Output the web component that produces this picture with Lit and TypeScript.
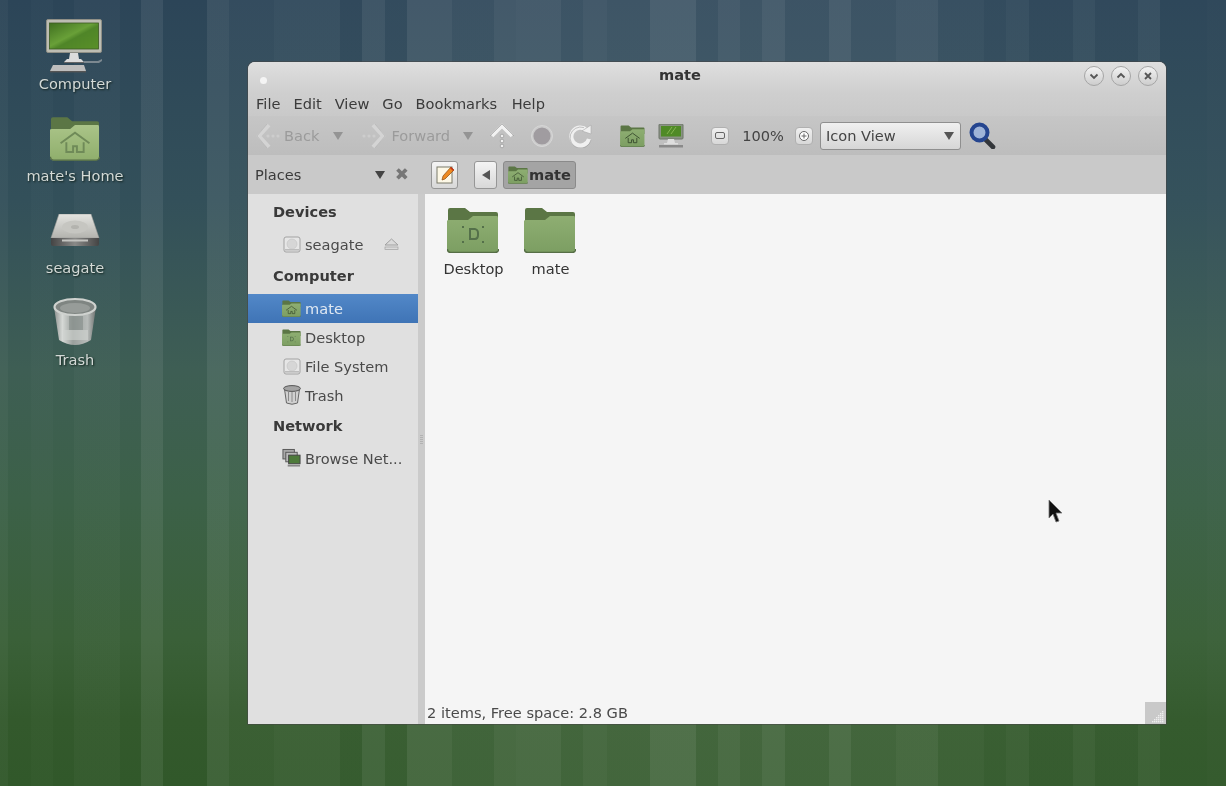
import { LitElement, html, css, svg } from "lit";
import { customElement } from "lit/decorators.js";

// stripe boundaries measured across the wallpaper: [end x in px, white alpha]
const STRIPES: [number, number][] = [
  [8, .03], [31, 0], [53, .015], [74, 0], [98, .025], [120, .025], [141, 0], [163, .07], [207, 0], [229, .075],
  [274, .04], [340, .06], [362, .025], [385, .09], [407, .035], [452, .11], [494, .07], [516, .11], [561, .12],
  [583, .08], [607, .11], [650, .085], [696, .145], [718, .08], [740, .12], [762, .085], [785, .135], [829, .08],
  [851, .135], [896, .08], [938, .105], [984, .06], [1006, .035], [1029, .06], [1073, .025], [1095, .06], [1138, .025],
  [1160, .06], [1207, .01], [1226, .02],
];

function stripeCss() {
  const stops: string[] = [];
  let x = 0;
  for (const [end, a] of STRIPES) {
    stops.push(`rgba(255,255,255,${a}) ${x}px ${end}px`);
    x = end;
  }
  return `linear-gradient(90deg, ${stops.join(",")}), linear-gradient(180deg, #2c4558 0, #33505a 200px, #3e5e54 370px, #3c6148 500px, #3a6038 640px, #33592c 720px, #31582a 786px)`;
}

const houseEmblem = (stroke: string) => svg`
  <path d="M11 28 L26 17 L41 28" fill="none" stroke=${stroke} stroke-width="2"/>
  <path d="M17 27 V37 H24 V31 H28 V37 H35 V27" fill="none" stroke=${stroke} stroke-width="2"/>`;

const deskEmblem = svg`
  <path d="M22 21 h6 q4 1 4 5 v2 q0 5 -4 5 h-6z M24 23 v8 h3.5 q2.5 0 2.5-3 v-2 q0-3-2.5-3z" fill="#54704a" fill-rule="evenodd"/>
  <g fill="#54704a"><rect x="15" y="19" width="2" height="2"/><rect x="35" y="19" width="2" height="2"/><rect x="15" y="34" width="2" height="2"/><rect x="35" y="34" width="2" height="2"/></g>`;

function folder(w: number, h: number, light: boolean, emblem: unknown = null) {
  const top = light ? "#aac488" : "#8eae72";
  const bot = light ? "#8fae6c" : "#7c9e62";
  const id = `f${w}${light ? "l" : "d"}`;
  return html`<svg width=${w} height=${h} viewBox="0 0 52 46">
    <defs><linearGradient id=${id} x1="0" y1="0" x2="0" y2="1"><stop offset="0" stop-color=${top}/><stop offset="1" stop-color=${bot}/></linearGradient></defs>
    <path d="M1 3 q0-2 2-2 h15 l5 4 h26 q2 0 2 2 v12 H1z" fill="#5b7645"/>
    <path d="M0 14 q0-1 2-1 h19 l5-4 h24 q1 0 1 2 v31 q0 4-4 4 H4 q-4 0-4-4z" fill=${`url(#${id})`}/>
    <path d="M0.5 42 q0 3.5 3.5 3.5 h44 q3.5 0 3.5-3.5" fill="none" stroke="#566e46" stroke-width="1.4"/>
    ${emblem}
  </svg>`;
}

const computerBig = html`<svg width="58" height="54" viewBox="0 0 58 54">
  <defs><linearGradient id="scr" x1="0" y1="0" x2="1" y2="1"><stop offset="0" stop-color="#3f6f20"/><stop offset=".45" stop-color="#69a038"/><stop offset=".55" stop-color="#4f8528"/><stop offset="1" stop-color="#5a9028"/></linearGradient></defs>
  <rect x=".5" y=".5" width="55" height="33" rx="1.5" fill="#bdbdb3" stroke="#8f8f86"/>
  <rect x="3.5" y="4" width="49" height="26" fill="url(#scr)" stroke="#3d5a24" stroke-width=".8"/>
  <path d="M24 34 h8 l1 6 h2 l3 3 H18 l3-3 h2z" fill="#dcdcdc"/><rect x="18" y="43" width="20" height="1" fill="#666"/>
  <path d="M7 46 h31 l2 6 H4z" fill="#bdbdbd"/><rect x="4" y="52" width="36" height="1.4" fill="#555"/>
  <path d="M38 42 h14 l4-2 v2 l-3 2 H38z" fill="#7c8890"/>
</svg>`;

const hddBig = html`<svg width="50" height="33" viewBox="0 0 50 33">
  <defs><linearGradient id="hd" x1="0" y1="0" x2="0" y2="1"><stop offset="0" stop-color="#e4e4e0"/><stop offset="1" stop-color="#b3b3ae"/></linearGradient>
  <linearGradient id="hs" x1="0" y1="0" x2="1" y2="0"><stop offset="0" stop-color="#444"/><stop offset=".5" stop-color="#8a8a88"/><stop offset="1" stop-color="#444"/></linearGradient></defs>
  <path d="M9 0 H41 L49 24 H1z" fill="url(#hd)" stroke="#9c9c98" stroke-width=".6"/>
  <ellipse cx="25" cy="13" rx="13" ry="6.5" fill="#c6c6c1"/><ellipse cx="25" cy="13" rx="4" ry="2" fill="#b3b3ae"/>
  <path d="M1 24 H49 V30 Q49 32 47 32 H3 Q1 32 1 30z" fill="url(#hs)"/><rect x="12" y="25.5" width="26" height="2" fill="#c4c4c0"/>
</svg>`;

const trashBig = html`<svg width="46" height="50" viewBox="0 0 46 50">
  <defs><linearGradient id="tb" x1="0" y1="0" x2="1" y2="0"><stop offset="0" stop-color="#8d918f"/><stop offset=".2" stop-color="#d6d9d6"/><stop offset=".45" stop-color="#9aa09d"/><stop offset=".8" stop-color="#b8bcba"/><stop offset="1" stop-color="#6f7371"/></linearGradient></defs>
  <path d="M2 10 L7 43 Q23 53 39 43 L44 10z" fill="url(#tb)"/>
  <rect x="17" y="19" width="14" height="14" fill="#848c88" opacity=".6"/>
  <rect x="12" y="33" width="24" height="10" fill="#d0d4d1" opacity=".6"/>
  <ellipse cx="23" cy="10" rx="20.5" ry="8" fill="#7f8582" stroke="#cfd2cf" stroke-width="2.2"/>
  <ellipse cx="23" cy="11" rx="15" ry="5" fill="#979c99"/>
</svg>`;

const hddSmall = html`<svg width="18" height="18" viewBox="0 0 18 18">
  <rect x="1" y="2" width="16" height="15" rx="2" fill="#e6e6e6" stroke="#a2a2a2"/>
  <circle cx="9" cy="9" r="5" fill="#d6d6d6" stroke="#c2c2c2" stroke-width=".6"/><rect x="2" y="14" width="14" height="1.6" fill="#bcbcbc"/>
</svg>`;

const trashSmall = html`<svg width="18" height="20" viewBox="0 0 18 20">
  <path d="M1.5 4 L3.5 18 Q9 20.5 14.5 18 L16.5 4z" fill="#d0d0d0" stroke="#666"/>
  <path d="M5.5 7 V16 M9 7 V17 M12.5 7 V16" stroke="#8a8a8a"/>
  <ellipse cx="9" cy="3.5" rx="8.4" ry="2.9" fill="#a4a4a4" stroke="#555"/>
</svg>`;

const netSmall = html`<svg width="20" height="20" viewBox="0 0 20 20">
  <rect x="1" y="1" width="12" height="10" fill="#a8a8a8" stroke="#555"/>
  <rect x="4" y="4" width="12" height="10" fill="#bbb" stroke="#555"/>
  <rect x="7" y="7" width="12" height="9" fill="#4d7a3a" stroke="#444"/>
  <rect x="6" y="17" width="13" height="2" fill="#888"/>
</svg>`;

const computerSmall = html`<svg width="26" height="24" viewBox="0 0 26 24">
  <rect x="1" y="0" width="24" height="15" rx="1" fill="#8a9384" stroke="#6c7468"/>
  <rect x="3" y="2" width="20" height="10.5" fill="#4f8a26"/><path d="M9 10 L14 3 M13 10 L18 3" stroke="#86b552"/>
  <path d="M10 15 h6 l1 4 h3 v1.5 H6 V19 h3z" fill="#dedede"/>
  <rect x="1" y="21" width="24" height="2.5" fill="#8a8a8a"/>
</svg>`;

const chev = (t: string) => html`<svg width="24" height="26" viewBox="0 0 24 26">
  <g transform=${t}>
    <path d="M13 2 L3 13 L13 24" fill="none" stroke="#d4d4d4" stroke-width="4"/>
    <path d="M11 1 L1 13 L11 25" fill="none" stroke="#b6b6b6" stroke-width=".7"/>
    <g fill="#cdcdcd"><circle cx="12" cy="13" r="1.6"/><circle cx="17" cy="13" r="1.6"/><circle cx="22" cy="13" r="1.6"/></g>
  </g></svg>`;

const upIcon = html`<svg width="26" height="26" viewBox="0 0 26 26">
  <path d="M3 13 L13 3 L23 13" fill="none" stroke="#f2f2f2" stroke-width="3.6"/>
  <path d="M1 13 L13 1 L25 13" fill="none" stroke="#a2a2a2" stroke-width=".7"/>
  <g fill="#f0f0f0" stroke="#8f8f8f" stroke-width=".6"><circle cx="13" cy="13" r="1.8"/><circle cx="13" cy="18" r="1.8"/><circle cx="13" cy="23" r="1.8"/></g>
</svg>`;

const stopIcon = html`<svg width="22" height="22" viewBox="0 0 22 22">
  <circle cx="11" cy="11" r="10.5" fill="#cccccc" stroke="#d6d6d6"/><circle cx="11" cy="11" r="8.6" fill="#a09ca0"/>
</svg>`;

const reloadIcon = html`<svg width="24" height="24" viewBox="0 0 24 24">
  <path d="M17.5 6 A9 9 0 1 0 20 15" fill="none" stroke="#f0f0f0" stroke-width="4.2"/>
  <path d="M13 7 L22 1 V10z" fill="#f0f0f0" stroke="#a8a8a8" stroke-width=".6"/>
  <path d="M15 3.6 A10.6 10.6 0 1 0 22 16" fill="none" stroke="#a0a0a0" stroke-width=".6"/>
</svg>`;

const searchIcon = html`<svg width="27" height="27" viewBox="0 0 27 27">
  <path d="M15 16 L24 25" stroke="#33363a" stroke-width="4.6" stroke-linecap="round"/>
  <circle cx="10.5" cy="10.5" r="8" fill="#9fb4d8" stroke="#25458f" stroke-width="4"/>
</svg>`;

const editIcon = html`<svg width="20" height="20" viewBox="0 0 20 20">
  <rect x="2" y="2" width="15" height="16" fill="#fdf8e6" stroke="#7a7a6a"/>
  <path d="M7 15 L8 11 L16 2 L19 5 L10 14z" fill="#ee8a20" stroke="#8a4a10" stroke-width=".7"/>
  <path d="M15 3 L18 6 L19 5 L16 2z" fill="#c8301c"/>
</svg>`;

const cursor = html`<svg width="16" height="24" viewBox="0 0 16 24">
  <path d="M1 0 V18 L5 14 L8 22 L11 21 L8 13 L14 13z" fill="#111" stroke="#777" stroke-width=".8"/>
</svg>`;

const winBtn = (d: string) => html`<span class="wbtn"><svg width="12" height="12" viewBox="0 0 12 12"><path d=${d} fill="none" stroke="#555" stroke-width="1.8"/></svg></span>`;

@customElement("app-root")
export class AppRoot extends LitElement {
  static styles = css`
    :host { display: block; width: 1226px; height: 786px; position: relative; overflow: hidden;
      font-family: "DejaVu Sans", sans-serif; font-size: 14.6px; color: #3b3b3b; filter: blur(.6px); }
    .bg { position: absolute; inset: 0; }
    .desk { position: relative; width: 150px; display: flex; flex-direction: column; }
    .di { height: 92px; padding-top: 17px; box-sizing: border-box; display: flex; flex-direction: column; align-items: center; }
    .di-icon { height: 62px; display: flex; align-items: center; justify-content: center; }
    .di-label { line-height: 17px; color: #d3d9d6; text-shadow: 1px 1px 2px #10201a; white-space: nowrap; }
    .win { position: absolute; left: 248px; top: 62px; width: 918px; height: 662px; box-sizing: border-box;
      border-radius: 7px 7px 0 0; display: flex; flex-direction: column; overflow: hidden;
      box-shadow: 0 0 0 1px rgba(70,70,70,.55); background: #f5f5f5; }
    .title { height: 30px; flex: none; display: flex; align-items: center; padding: 0 8px 0 12px;
      background: linear-gradient(#dfdfdf, #cfcfcf); position: relative; }
    .dot { width: 7px; height: 7px; border-radius: 50%; background: #f4f4f4; margin-top: 6px; }
    .wtitle { position: absolute; left: 0; top: 4px; width: 864px; text-align: center; font-weight: 700; color: #333; line-height: 17px; }
    .wbtns { margin-left: auto; display: flex; gap: 7px; margin-top: -2px; }
    .wbtn { width: 20px; height: 20px; border-radius: 50%; box-sizing: border-box; border: 1px solid #a5a5a5;
      background: linear-gradient(#f2f2f2, #cdcdcd); display: flex; align-items: center; justify-content: center; }
    .menu { height: 24px; box-sizing: border-box; padding-bottom: 2px; flex: none; display: flex; align-items: center; gap: 13px; padding-left: 8px;
      background: linear-gradient(#cfcfcf, #c9c9c9); }
    .menu span:last-child { margin-left: 1.5px; }
    .tools { height: 39px; flex: none; display: flex; align-items: center; padding-left: 8px;
      background: linear-gradient(#c6c6c6, #bdbdbd); }
    .tools > * { flex: none; display: flex; align-items: center; }
    .off { color: #9b9b9b; }
    .tri { width: 0; height: 0; border-left: 5px solid transparent; border-right: 5px solid transparent; border-top: 8px solid #949494; }
    .ml4 { margin-left: 4px; } .ml5 { margin-left: 5px; } .ml14 { margin-left: 14px; } .ml16 { margin-left: 16px; }
    .ml19 { margin-left: 19px; } .ml27 { margin-left: 27px; } .ml7 { margin-left: 7px; }
    .ml13 { margin-left: 13px; } .ml11 { margin-left: 11px; } .ml8 { margin-left: 8px; }
    .zb { width: 18px; height: 18px; box-sizing: border-box; border: 1px solid #b0b0b0; border-radius: 4px;
      background: linear-gradient(#f0f0f0, #d8d8d8); display: flex; align-items: center; justify-content: center; }
    .pct { color: #444; }
    .combo { width: 141px; height: 28px; box-sizing: border-box; border: 1px solid #8f8f8f; border-radius: 3px;
      background: linear-gradient(#f0f0f0, #d6d6d6); padding: 0 6px 0 5px; justify-content: space-between; color: #444; }
    .combo .tri { border-top-color: #555; }
    .loc { height: 39px; flex: none; display: flex; background: #c9c9c9; }
    .places { width: 170px; flex: none; display: flex; align-items: center; padding: 0 9px 0 7px; box-sizing: border-box; }
    .places .tri { border-top-color: #444; margin-left: auto; }
    .places .x { margin-left: 10px; font-size: 17px; font-weight: 700; color: #777; line-height: 1; }
    .path { display: flex; align-items: center; padding-left: 13px; }
    .pbtn { height: 28px; box-sizing: border-box; border: 1px solid #969696; border-radius: 3px;
      background: linear-gradient(#f4f4f4, #d8d8d8); display: flex; align-items: center; justify-content: center; }
    .pedit { width: 27px; }
    .pback { width: 23px; margin-left: 16px; }
    .pback i { width: 0; height: 0; border-top: 5px solid transparent; border-bottom: 5px solid transparent; border-right: 8px solid #555; }
    .pcur { width: 73px; margin-left: 6px; background: #a4a4a4; border-color: #8a8a8a; gap: 1px; font-weight: 700; color: #333; }
    .main { flex: 1; display: flex; min-height: 0; }
    .side { width: 170px; flex: none; background: #e0e0e0; padding-top: 2px; box-sizing: border-box; }
    .hdr { height: 32px; line-height: 32px; padding-left: 25px; font-weight: 700; margin-bottom: 2px; color: #3a3a3a; }
    .hdr.c { margin-top: 1px; }
    .row { height: 29px; box-sizing: border-box; padding-bottom: 1px; display: flex; align-items: center; padding-left: 34px; gap: 4px; color: #4a4a4a; }
    .row .ic { width: 19px; display: flex; justify-content: center; flex: none; }
    .row.sel { background: linear-gradient(#5288c8, #3f74b6); color: #dfe8f2; }
    .eject { margin-left: auto; margin-right: 19px; }
    .gut { width: 7px; flex: none; background: #cbcbcb; display: flex; align-items: center; justify-content: center; }
    .gut i { width: 3px; height: 10px; margin-top: -38px; background: repeating-linear-gradient(#b2b2b2 0 1px, transparent 1px 2px); }
    .view { flex: 1; position: relative; background: #f5f5f5; display: flex; flex-direction: column; padding: 13px 0 0 10px; box-sizing: border-box; min-width: 0; }
    .items { display: flex; }
    .it { width: 77px; display: flex; flex-direction: column; align-items: center; color: #333; }
    .it svg { margin-left: -2px; }
    .it span { margin-top: 7px; line-height: 18px; }
    .status { margin-top: auto; margin-left: -8px; height: 22px; line-height: 22px; color: #4a4a4a; }
    .grip { position: absolute; right: 0; bottom: 0; width: 21px; height: 22px; background: #c9c9c9; }
    .cur { position: absolute; left: 1048px; top: 500px; display: flex; }
  `;

  render() {
    const house = houseEmblem("#6f8a58");
    const dots = [[17,9],[15,11],[17,11],[13,13],[15,13],[17,13],[11,15],[13,15],[15,15],[17,15],[9,17],[11,17],[13,17],[15,17],[17,17],[7,19],[9,19],[11,19],[13,19],[15,19],[17,19]];
    return html`
      <div class="bg" style="background:${stripeCss()}"></div>
      <div class="desk">
        <div class="di"><div class="di-icon">${computerBig}</div><div class="di-label">Computer</div></div>
        <div class="di"><div class="di-icon">${folder(50, 45, true, house)}</div><div class="di-label">mate's Home</div></div>
        <div class="di"><div class="di-icon">${hddBig}</div><div class="di-label">seagate</div></div>
        <div class="di"><div class="di-icon">${trashBig}</div><div class="di-label">Trash</div></div>
      </div>
      <div class="win">
        <div class="title">
          <i class="dot"></i>
          <div class="wbtns">
            ${winBtn("M2.5 4.5 L6 8 L9.5 4.5")}${winBtn("M2.5 7.5 L6 4 L9.5 7.5")}${winBtn("M3 3 L9 9 M9 3 L3 9")}
          </div>
        </div>
        <div class="menu"><span>File</span><span>Edit</span><span>View</span><span>Go</span><span>Bookmarks</span><span>Help</span></div>
        <div class="tools">
          ${chev("")}
          <span class="off ml4">Back</span>
          <i class="tri ml14"></i>
          <span class="ml19">${chev("translate(24 0) scale(-1 1)")}</span>
          <span class="off ml5">Forward</span>
          <i class="tri ml13"></i>
          <span class="ml16">${upIcon}</span>
          <span class="ml16">${stopIcon}</span>
          <span class="ml16">${reloadIcon}</span>
          <span class="ml27">${folder(25, 22, false, houseEmblem("#3c5030"))}</span>
          <span class="ml13">${computerSmall}</span>
          <span class="ml27 zb"><svg width="10" height="8" viewBox="0 0 10 8"><rect x=".5" y=".5" width="9" height="6" rx="1.5" fill="none" stroke="#666"/></svg></span>
          <span class="pct ml13">100%</span>
          <span class="ml11 zb"><svg width="12" height="12" viewBox="0 0 12 12"><circle cx="6" cy="6" r="4.5" fill="#fff" stroke="#666"/><path d="M3.5 6 H8.5 M6 3.5 V8.5" stroke="#666"/></svg></span>
          <span class="combo ml7"><span>Icon View</span><i class="tri"></i></span>
          <span class="ml8">${searchIcon}</span>
        </div>
        <div class="loc">
          <div class="places"><span>Places</span><i class="tri"></i><span class="x">✖</span></div>
          <div class="path">
            <span class="pbtn pedit">${editIcon}</span>
            <span class="pbtn pback"><i></i></span>
            <span class="pbtn pcur">${folder(20, 18, false, houseEmblem("#3c5030"))}<span>mate</span></span>
          </div>
        </div>
        <div class="main">
          <div class="side">
            <div class="hdr">Devices</div>
            <div class="row"><span class="ic">${hddSmall}</span><span>seagate</span>
              <svg class="eject" width="15" height="12" viewBox="0 0 15 12"><path d="M7.5 1 L14 7 H1z" fill="#dadada" stroke="#a0a0a0"/><rect x="1" y="9" width="13" height="2.4" fill="#dadada" stroke="#a0a0a0" stroke-width=".7"/></svg>
            </div>
            <div class="hdr c">Computer</div>
            <div class="row sel"><span class="ic">${folder(19, 17, false, houseEmblem("#3c5030"))}</span><span>mate</span></div>
            <div class="row"><span class="ic">${folder(19, 17, false, deskEmblem)}</span><span>Desktop</span></div>
            <div class="row"><span class="ic">${hddSmall}</span><span>File System</span></div>
            <div class="row"><span class="ic">${trashSmall}</span><span>Trash</span></div>
            <div class="hdr">Network</div>
            <div class="row"><span class="ic">${netSmall}</span><span>Browse Net...</span></div>
          </div>
          <div class="gut"><i></i></div>
          <div class="view">
            <div class="items">
              <div class="it">${folder(52, 46, false, deskEmblem)}<span>Desktop</span></div>
              <div class="it">${folder(52, 46, false)}<span>mate</span></div>
            </div>
            <div class="status">2 items, Free space: 2.8 GB</div>
            <div class="grip"><svg width="21" height="22" viewBox="0 0 21 22"><g fill="#eee">
              ${dots.map(([x, y]) => svg`<rect x=${x} y=${y} width="1.4" height="1.4"/>`)}
            </g></svg></div>
          </div>
        </div>
        <div class="wtitle">mate</div>
      </div>
      <div class="cur">${cursor}</div>
    `;
  }
}
